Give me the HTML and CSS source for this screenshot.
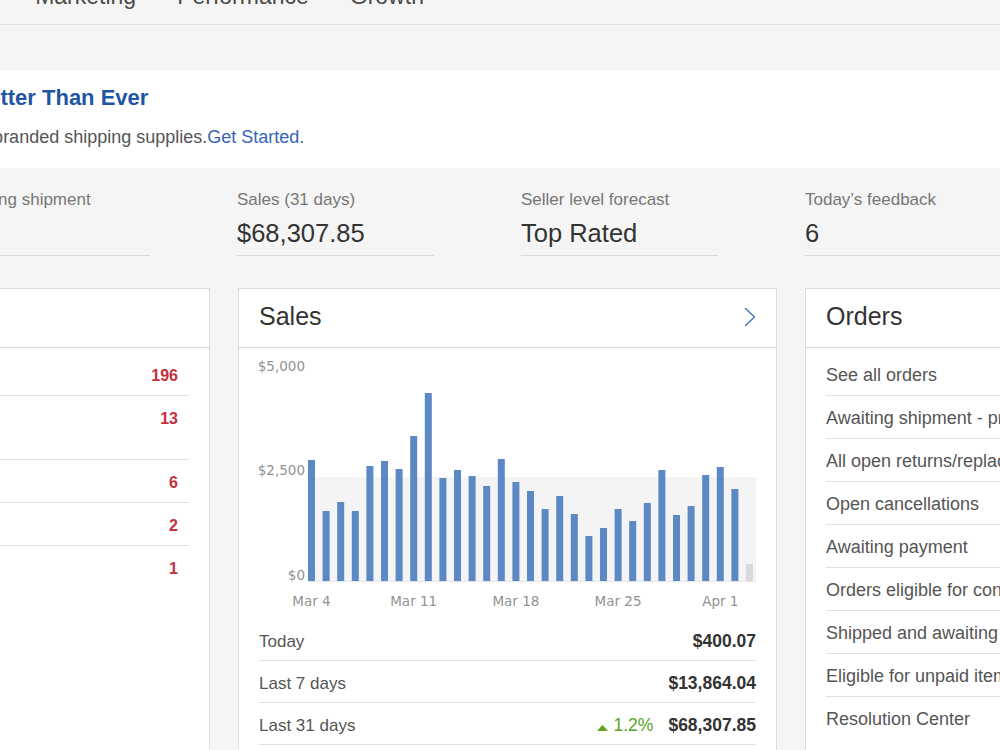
FILE: index.html
```html
<!doctype html>
<html>
  <head>
    <title>Seller Hub</title>
    <link rel="stylesheet" href="styles.css">
  </head>
  <body>
    <nav class="topnav">
      <ul class="tabs">
        <li>Overview</li>
        <li>Orders</li>
        <li>Listings</li>
        <li>Marketing</li>
        <li>Performance</li>
        <li>Growth</li>
      </ul>
    </nav>

    <div class="banner">
      <div class="banner-copy">
        <h2>Shipping Supplies: Better Than Ever</h2>
        <p>Save money now with eBay branded shipping supplies.<a href="#">Get Started.</a></p>
      </div>
    </div>

    <div class="stats">
      <div class="stat">
        <div class="stat-label">Awaiting shipment</div>
        <div class="stat-value">196</div>
      </div>
      <div class="stat">
        <div class="stat-label">Sales (31 days)</div>
        <div class="stat-value">$68,307.85</div>
      </div>
      <div class="stat">
        <div class="stat-label">Seller level forecast</div>
        <div class="stat-value">Top Rated</div>
      </div>
      <div class="stat">
        <div class="stat-label">Today’s feedback</div>
        <div class="stat-value">6</div>
      </div>
    </div>

    <div class="cards">
      <!-- Tasks -->
      <section class="card">
        <div class="card-head">
          <h3>Tasks</h3>
        </div>
        <ul class="card-list tasks">
          <li><span>Orders awaiting shipment</span><b class="count">196</b></li>
          <li class="tall">
            <span>Buyer messages<br>Respond within 24 hours</span>
            <b class="count">13</b>
          </li>
          <li><span>Returns to respond to</span><b class="count">6</b></li>
          <li><span>Cancellation requests</span><b class="count">2</b></li>
          <li><span>Items to relist</span><b class="count">1</b></li>
        </ul>
      </section>

      <!-- Sales -->
      <section class="card">
        <div class="card-head">
          <h3>Sales</h3>
          <svg class="chevron" viewBox="0 0 12 20" fill="none" stroke="currentColor" stroke-width="1.5">
            <path d="M1.5 1.5L10.5 10 1.5 18.5" stroke-linecap="round" stroke-linejoin="round" />
          </svg>
        </div>
        <div class="card-body">
          <svg class="chart" width="497" height="271" viewBox="0 0 497 271">
            <!-- shaded 0 - 2,500 range -->
            <rect x="49" y="129" width="448" height="104" fill="#f4f4f4" />
            <line x1="49" y1="233.5" x2="497" y2="233.5" stroke="#e6e6e6" />

            <g class="axis-y" text-anchor="end">
              <text x="46" y="23">$5,000</text>
              <text x="46" y="127">$2,500</text>
              <text x="46" y="232">$0</text>
            </g>

            <g fill="#5c88c4">
              <rect x="49" y="112" width="7" height="121" />
              <rect x="63.6" y="163" width="7" height="70" />
              <rect x="78.2" y="154" width="7" height="79" />
              <rect x="92.8" y="163" width="7" height="70" />
              <rect x="107.4" y="118" width="7" height="115" />
              <rect x="122" y="113" width="7" height="120" />
              <rect x="136.6" y="121" width="7" height="112" />
              <rect x="151.2" y="88" width="7" height="145" />
              <rect x="165.8" y="45" width="7" height="188" />
              <rect x="180.4" y="130" width="7" height="103" />
              <rect x="195" y="122" width="7" height="111" />
              <rect x="209.6" y="128" width="7" height="105" />
              <rect x="224.2" y="138" width="7" height="95" />
              <rect x="238.8" y="111" width="7" height="122" />
              <rect x="253.4" y="134" width="7" height="99" />
              <rect x="268" y="143" width="7" height="90" />
              <rect x="282.6" y="161" width="7" height="72" />
              <rect x="297.2" y="148" width="7" height="85" />
              <rect x="311.8" y="166" width="7" height="67" />
              <rect x="326.4" y="188" width="7" height="45" />
              <rect x="341" y="180" width="7" height="53" />
              <rect x="355.6" y="161" width="7" height="72" />
              <rect x="370.2" y="173" width="7" height="60" />
              <rect x="384.8" y="155" width="7" height="78" />
              <rect x="399.4" y="122" width="7" height="111" />
              <rect x="414" y="167" width="7" height="66" />
              <rect x="428.6" y="158" width="7" height="75" />
              <rect x="443.2" y="127" width="7" height="106" />
              <rect x="457.8" y="119" width="7" height="114" />
              <rect x="472.4" y="141" width="7" height="92" />
            </g>
            <!-- today, still in progress -->
            <rect x="487" y="216" width="7" height="17" fill="#dadada" />

            <g class="axis-x" text-anchor="middle">
              <text x="52.5" y="258">Mar 4</text>
              <text x="154.7" y="258">Mar 11</text>
              <text x="256.9" y="258">Mar 18</text>
              <text x="359.1" y="258">Mar 25</text>
              <text x="461.3" y="258">Apr 1</text>
            </g>
          </svg>

          <ul class="summary">
            <li><span class="label">Today</span><span class="amount">$400.07</span></li>
            <li><span class="label">Last 7 days</span><span class="amount">$13,864.04</span></li>
            <li>
              <span class="label">Last 31 days</span>
              <span class="trend">
                <svg viewBox="0 0 11 6"><polygon points="0,6 5.5,0 11,6" fill="currentColor" /></svg>1.2%
              </span>
              <span class="amount">$68,307.85</span>
            </li>
          </ul>
        </div>
      </section>

      <!-- Orders -->
      <section class="card">
        <div class="card-head">
          <h3>Orders</h3>
        </div>
        <ul class="card-list orders">
          <li>See all orders</li>
          <li>Awaiting shipment - print shipping label</li>
          <li>All open returns/replacements</li>
          <li>Open cancellations</li>
          <li>Awaiting payment</li>
          <li>Orders eligible for consolidated shipping</li>
          <li>Shipped and awaiting feedback</li>
          <li>Eligible for unpaid item reminder</li>
          <li>Resolution Center</li>
        </ul>
      </section>
    </div>
  </body>
</html>
```

FILE: styles.css
```css
:root {
  --page-bg: #f5f5f5;
  --card-border: #dcdcdc;
  --rule: #e1e1e1;
  --text-color: #333;
  --muted: #777;
  --link: #3665b3;
  --alert: #c2303d;
  --positive: #5aa427;
}

html,
body {
  height: 100%;
  overflow: hidden;
}

body {
  margin: 0;
  background-color: var(--page-bg);
  color: var(--text-color);
  font-family: "Liberation Sans", Arial, Helvetica, sans-serif;
}

/* top navigation */

.topnav {
  display: flow-root;
  height: 24px;
  border-bottom: 1px solid #e2e2e2;
}

.tabs {
  display: flex;
  gap: 41px;
  margin: -17px 0 0 -332px;
  padding: 0;
  list-style: none;
  font-size: 23px;
  line-height: 26px;
  color: #4a4a4a;
  white-space: nowrap;
}

/* promo banner */

.banner {
  margin-top: 45px;
  padding: 15px 0 20px;
  background-color: #fff;
  white-space: nowrap;
}

.banner-copy {
  margin-left: -233px;
}

.banner h2 {
  margin: 0;
  font-size: 22px;
  line-height: 26px;
  font-weight: bold;
  color: #1e56a3;
}

.banner p {
  margin: 15px 0 0;
  font-size: 18px;
  line-height: 22px;
  color: #555;
}

.banner a {
  color: var(--link);
  text-decoration: none;
}

/* summary numbers */

.stats {
  display: grid;
  grid-template-columns: repeat(4, 256px);
  column-gap: 28px;
  margin-left: -47px;
  padding-top: 22px;
}

.stat {
  width: 197px;
  padding-bottom: 7px;
  border-bottom: 1px solid #d9d9d9;
  white-space: nowrap;
}

.stat-label {
  font-size: 17px;
  line-height: 20px;
  color: var(--muted);
}

.stat-value {
  margin-top: 8px;
  font-size: 25.5px;
  line-height: 30px;
  color: var(--text-color);
}

/* cards */

.cards {
  display: grid;
  grid-template-columns: 540px 539px 256px;
  column-gap: 28px;
  margin: 32px 0 0 -330px;
}

.card {
  background-color: #fff;
  border: 1px solid var(--card-border);
}

.card-head {
  display: flex;
  align-items: center;
  justify-content: space-between;
  height: 55px;
  padding: 0 20px 3px;
  border-bottom: 1px solid #d4d4d4;
}

.card-head h3 {
  margin: 0;
  font-size: 25px;
  line-height: 25px;
  font-weight: normal;
  color: var(--text-color);
}

.chevron {
  width: 12px;
  height: 20px;
  color: #4a78bd;
}

.card-list {
  list-style: none;
  margin: 0;
  padding: 5px 20px 0;
}

.card-list li {
  display: flex;
  align-items: flex-start;
  justify-content: space-between;
  height: 39px;
  padding-top: 3px;
  line-height: 39px;
  border-bottom: 1px solid var(--rule);
  white-space: nowrap;
  overflow: hidden;
}

.card-list li:last-child {
  border-bottom: none;
}

.tasks li {
  font-size: 16px;
  color: #555;
}

.tasks li.tall {
  height: 60px;
}

.tasks li.tall span {
  line-height: 20px;
  padding-top: 10px;
}

.count {
  padding-right: 11px;
  color: var(--alert);
  font-size: 16px;
}

.orders li {
  font-size: 18px;
  color: #555;
}

/* sales chart */

.card-body {
  padding: 0 20px 24px;
}

.chart {
  display: block;
}

.chart text {
  font-family: "DejaVu Sans", Verdana, sans-serif;
  font-size: 13.5px;
  fill: #929292;
}

.summary {
  list-style: none;
  margin: 0;
  padding: 0;
}

.summary li {
  display: flex;
  align-items: baseline;
  height: 37px;
  padding-top: 4px;
  line-height: 37px;
  border-bottom: 1px solid var(--rule);
  font-size: 17px;
  color: #555;
}

.summary .label {
  flex: 1;
}

.summary .amount {
  font-size: 17.5px;
  font-weight: bold;
  color: var(--text-color);
}

.trend {
  margin-right: 15px;
  font-size: 17.5px;
  color: var(--positive);
}

.trend svg {
  width: 11px;
  height: 6px;
  margin-right: 6px;
}
```
